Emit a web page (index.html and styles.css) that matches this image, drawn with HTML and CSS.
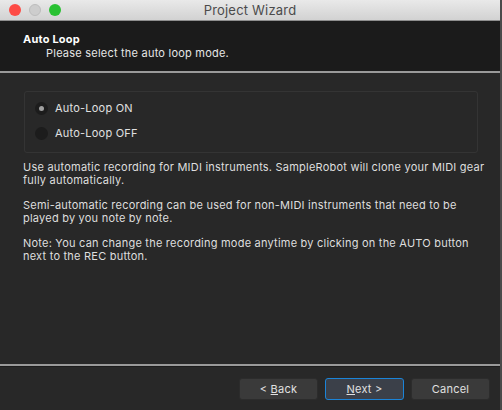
FILE: index.html
```html
<!DOCTYPE html>
<html lang="en">
<head>
    <meta charset="UTF-8">
    <title>Project Wizard</title>
    <link rel="stylesheet" href="styles.css">
</head>
<body>
    <div class="window">
        <div class="titlebar">
            <div class="lights">
                <span class="light red"></span>
                <span class="light grey"></span>
                <span class="light green"></span>
            </div>
            <div class="title">Project Wizard</div>
        </div>

        <div class="header">
            <div class="header-title">Auto Loop</div>
            <div class="header-sub">Please select the auto loop mode.</div>
        </div>

        <div class="content">
            <div class="group">
                <label class="radio"><span class="dot checked"></span>Auto-Loop ON</label>
                <label class="radio"><span class="dot"></span>Auto-Loop OFF</label>
            </div>
            <p>Use automatic recording for MIDI instruments. SampleRobot will clone your MIDI gear fully automatically.</p>
            <p>Semi-automatic recording can be used for non-MIDI instruments that need to be played by you note by note.</p>
            <p>Note: You can change the recording mode anytime by clicking on the AUTO button next to the REC button.</p>
        </div>

        <div class="footer">
            <button class="btn"><span>&lt; <u>B</u>ack</span></button>
            <button class="btn default"><span><u>N</u>ext &gt;</span></button>
            <button class="btn">Cancel</button>
        </div>
    </div>
</body>
</html>
```

FILE: styles.css
```css
body {
    margin: 0;
    background: #4a4a4a;
    font-family: Inter, "Noto Sans", sans-serif;
    font-size: 11px;
    letter-spacing: 0.22px;
}
.window {
    width: 500px;
    height: 410px;
    background: #282828;
    display: flex;
    flex-direction: column;
    color: #dcdcdc;
}
.titlebar {
    height: 20px;
    border-bottom: 1px solid #8e8e8e;
    background: linear-gradient(#e9e9e9, #d2d2d2);
    position: relative;
    display: flex;
    align-items: center;
    justify-content: center;
}
.lights {
    position: absolute;
    left: 9px;
    top: 4px;
    display: flex;
    gap: 8px;
}
.light {
    width: 12px;
    height: 12px;
    border-radius: 50%;
}
.red { background: #fd4b45; }
.grey { background: #cdcdcd; border: 1px solid #bdbdbd; box-sizing: border-box; }
.green { background: #29c132; }
.title {
    font-size: 13px;
    letter-spacing: 0.2px;
    color: #4b4b4b;
}
.header {
    height: 52px;
    background: #1b1b1b;
    padding: 11px 0 0 23px;
    box-sizing: border-box;
    border-bottom: 2px solid #9a9a9a;
    color: #ffffff;
}
.header-title {
    font-weight: bold;
    font-size: 11px;
    line-height: 14px;
}
.header-sub {
    padding-left: 23px;
    line-height: 14px;
    color: #e6e6e6;
}
.content {
    flex: 1;
    padding: 18px 10px 0 23px;
    border-bottom: 2px solid #9a9a9a;
}
.group {
    width: 454px;
    box-sizing: border-box;
    margin-left: 1px;
    height: 62px;
    border: 1px solid #343434;
    border-radius: 3px;
    padding: 9px 0 0 10px;
    display: flex;
    flex-direction: column;
    gap: 11px;
}
.radio {
    display: flex;
    align-items: center;
    gap: 7px;
    line-height: 14px;
    color: #e0e0e0;
}
.dot {
    width: 13px;
    height: 13px;
    border-radius: 50%;
    background: #1c1c1c;
    position: relative;
}
.dot.checked::after {
    content: "";
    position: absolute;
    left: 4px;
    top: 4px;
    width: 5px;
    height: 5px;
    border-radius: 50%;
    background: #a0a0a0;
}
p {
    margin: 8px 0 12px 0;
    line-height: 13px;
    color: #dedede;
}
.footer {
    height: 43px;
    display: flex;
    justify-content: flex-end;
    align-items: center;
    gap: 7px;
    padding-right: 10px;
    border-top: 1px solid #1c1c1c;
}
.btn {
    width: 79px;
    height: 22px;
    background: #3a3a3a;
    border: 1px solid #2c2c2c;
    border-radius: 3px;
    color: #e0e0e0;
    font-family: Inter, "Noto Sans", sans-serif;
    font-size: 11px;
    letter-spacing: 0.22px;
    padding: 0;
}
.btn.default {
    background: #3b4049;
    border: 1px solid #1b84d8;
}
```
